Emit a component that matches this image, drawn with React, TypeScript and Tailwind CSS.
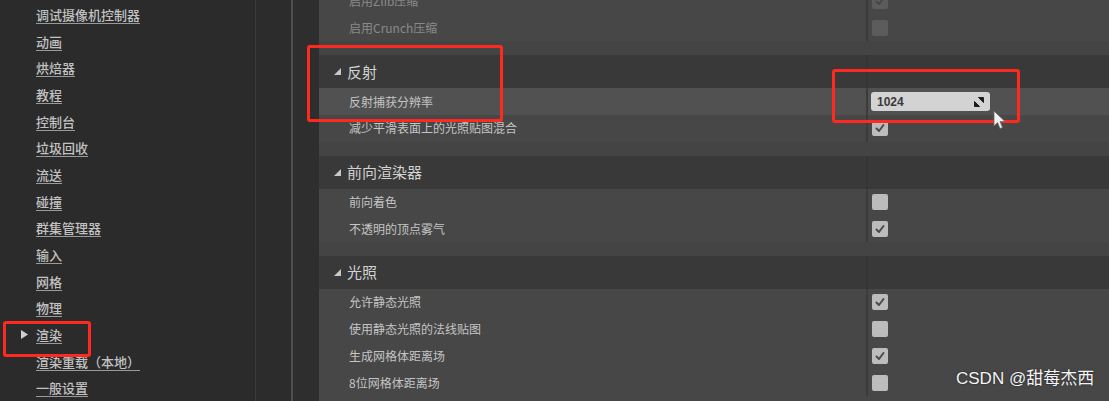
import React from "react";

const navItems = [
  "调试摄像机控制器",
  "动画",
  "烘焙器",
  "教程",
  "控制台",
  "垃圾回收",
  "流送",
  "碰撞",
  "群集管理器",
  "输入",
  "网格",
  "物理",
  "渲染",
  "渲染重载（本地）",
  "一般设置",
];

type Row =
  | { kind: "row"; label: string; checked?: boolean; disabled?: boolean; value?: string; active?: boolean }
  | { kind: "header"; label: string }
  | { kind: "gap" };

const rows: Row[] = [
  { kind: "row", label: "启用Zlib压缩", checked: true, disabled: true },
  { kind: "row", label: "启用Crunch压缩", disabled: true },
  { kind: "gap" },
  { kind: "header", label: "反射" },
  { kind: "row", label: "反射捕获分辨率", value: "1024", active: true },
  { kind: "row", label: "减少平滑表面上的光照贴图混合", checked: true },
  { kind: "gap" },
  { kind: "header", label: "前向渲染器" },
  { kind: "row", label: "前向着色" },
  { kind: "row", label: "不透明的顶点雾气", checked: true },
  { kind: "gap" },
  { kind: "header", label: "光照" },
  { kind: "row", label: "允许静态光照", checked: true },
  { kind: "row", label: "使用静态光照的法线贴图" },
  { kind: "row", label: "生成网格体距离场", checked: true },
  { kind: "row", label: "8位网格体距离场" },
];

const Checkbox = ({ checked, disabled }: { checked?: boolean; disabled?: boolean }) => (
  <div
    className={
      "w-[16px] h-[16px] rounded-[2px] flex items-center justify-center " +
      (disabled ? "bg-[#5c5c5c]" : "bg-[#bcbcbc]")
    }
  >
    {checked && (
      <svg width="12" height="12" viewBox="0 0 12 12">
        <path
          d="M2.5 6.5 L5 9 L9.5 3"
          fill="none"
          stroke={disabled ? "#474747" : "#4a4a4a"}
          strokeWidth="2"
          strokeLinecap="round"
          strokeLinejoin="round"
        />
      </svg>
    )}
  </div>
);

const ValueField = ({ value }: { value: string }) => (
  <div className="ml-[-1px] w-[119px] h-[19px] rounded-[3px] bg-[#d3d3d3] flex items-center justify-between pl-[6px] pr-[6px]">
    <span className="text-[12px] font-bold text-[#3a3a3a] font-['Liberation_Sans',sans-serif]">{value}</span>
    <svg width="10" height="10" viewBox="0 0 10 10">
      <path d="M4.5 0.5 L9.5 0.5 L9.5 5.5 Z" fill="#1e1e1e" stroke="#1e1e1e" strokeLinejoin="round" />
      <path d="M0.5 4.5 L0.5 9.5 L5.5 9.5 Z" fill="#1e1e1e" stroke="#1e1e1e" strokeLinejoin="round" />
    </svg>
  </div>
);

export default function App() {
  return (
    <div className="relative w-[1109px] h-[401px] overflow-hidden flex bg-[#2b2b2b] font-['Noto_Sans_CJK_SC',sans-serif]">
      {/* Category list */}
      <aside className="w-[255px] pt-[1px] flex flex-col">
        {navItems.map((item) => (
          <div key={item} className="h-[27px] flex items-center relative pl-[36px]">
            {item === "渲染" && (
              <svg className="absolute left-[21px]" width="7" height="9" viewBox="0 0 7 9">
                <polygon points="0,0 7,4.5 0,9" fill="#cfcfcf" />
              </svg>
            )}
            <span className="text-[13px] font-medium text-[#c2c2c2] underline underline-offset-[3px] decoration-[#9a9a9a] leading-none">
              {item}
            </span>
          </div>
        ))}
      </aside>
      <div className="w-px bg-[#3a3a3a]" />
      <div className="w-[35px] bg-[#2c2c2c]" />
      <div className="w-[2px] bg-[#4f4f4f]" />
      <div className="w-[26px] bg-[#2e2e2e]" />

      {/* Details panel */}
      <main className="flex-1 flex flex-col bg-[#474747] mt-[-12px]">
        {rows.map((r, i) => {
          if (r.kind === "gap") return <div key={i} className="h-[14px] shrink-0 bg-[#444444]" />;
          if (r.kind === "header")
            return (
              <div key={i} className="h-[33px] shrink-0 flex bg-[#393939]">
                <div className="w-[547px] flex items-center pl-[15px] gap-[6px]">
                  <svg width="7" height="7" viewBox="0 0 7 7">
                    <polygon points="7,0 7,7 0,7" fill="#c8c8c8" />
                  </svg>
                  <span className="text-[15px] text-[#d2d2d2]">{r.label}</span>
                </div>
                <div className="w-[2px] bg-[#353535]" />
              </div>
            );
          return (
            <div key={i} className={"h-[26.7px] shrink-0 flex " + (r.active ? "bg-[#515151]" : "")}>
              <div className="w-[547px] flex items-center pl-[30px]">
                <span className={"text-[12px] " + (r.disabled ? "text-[#8a8a8a]" : "text-[#c4c4c4]")}>{r.label}</span>
              </div>
              <div className="w-[2px] bg-[#3b3b3b]" />
              <div className="flex-1 flex items-center pl-[4px]">
                {r.value ? <ValueField value={r.value} /> : <Checkbox checked={r.checked} disabled={r.disabled} />}
              </div>
            </div>
          );
        })}
      </main>

      {/* Annotation boxes */}
      <div className="absolute left-[3px] top-[321px] w-[88px] h-[36px] border-[3px] border-[#ff2a1f] rounded-[3px]" />
      <div className="absolute left-[307px] top-[45px] w-[196px] h-[77px] border-[3px] border-[#ff2a1f] rounded-[3px]" />
      <div className="absolute left-[832px] top-[69px] w-[188px] h-[54px] border-[3px] border-[#ff2a1f] rounded-[3px]" />

      {/* Mouse cursor */}
      <svg className="absolute left-[993px] top-[110px]" width="14" height="20" viewBox="0 0 14 20">
        <path d="M1 1 L1 16 L4.5 12.5 L7 18.5 L9.5 17.5 L7 11.5 L12 11.5 Z" fill="#f2f2f2" stroke="#6a6a6a" strokeWidth="0.8" />
      </svg>

      {/* Watermark */}
      <div className="absolute left-[956px] top-[370px] text-[17px] leading-none text-[#f4f4f4] [text-shadow:0_0_2px_rgba(0,0,0,0.6)] font-['Liberation_Sans','Noto_Sans_CJK_SC',sans-serif]">
        CSDN @甜莓杰西
      </div>
    </div>
  );
}
